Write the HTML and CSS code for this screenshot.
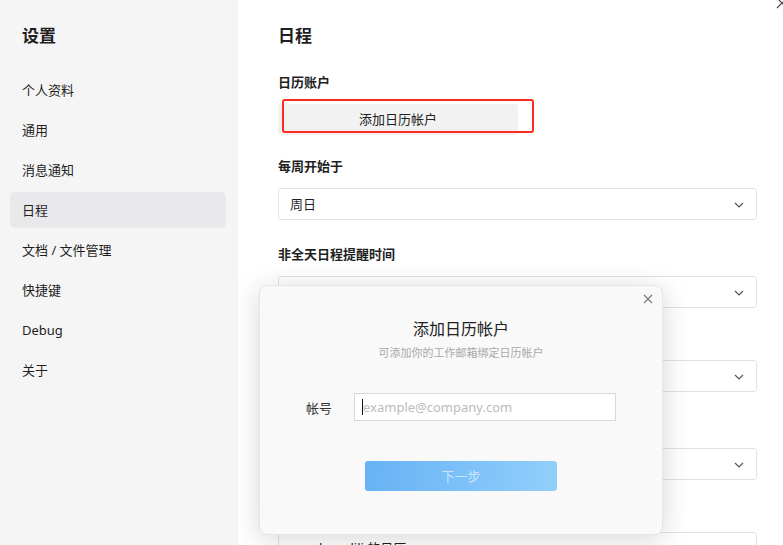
FILE: index.html
```html
<!DOCTYPE html>
<html lang="zh-CN">
<head>
    <meta charset="UTF-8">
    <title>设置</title>
    <link rel="stylesheet" href="styles.css">
</head>
<body>
    <div class="app">
        <div class="sidebar">
            <div class="side-title">设置</div>
            <div class="nav-item">个人资料</div>
            <div class="nav-item">通用</div>
            <div class="nav-item">消息通知</div>
            <div class="nav-item active">日程</div>
            <div class="nav-item">文档 / 文件管理</div>
            <div class="nav-item">快捷键</div>
            <div class="nav-item">Debug</div>
            <div class="nav-item">关于</div>
        </div>

        <div class="main">
            <div class="page-title">日程</div>

            <div class="label first">日历账户</div>
            <div class="add-wrap">
                <div class="add-btn">添加日历帐户</div>
                <div class="mark"></div>
            </div>

            <div class="label">每周开始于</div>
            <div class="select">周日
                <svg class="chev" width="10" height="6" viewBox="0 0 10 6"><path d="M1 1l4 4 4-4" fill="none" stroke="#555" stroke-width="1.2"/></svg>
            </div>

            <div class="label">非全天日程提醒时间</div>
            <div class="select">提前5分钟
                <svg class="chev" width="10" height="6" viewBox="0 0 10 6"><path d="M1 1l4 4 4-4" fill="none" stroke="#555" stroke-width="1.2"/></svg>
            </div>

            <div class="label tight">全天日程提醒时间</div>
            <div class="select">当天 09:00
                <svg class="chev" width="10" height="6" viewBox="0 0 10 6"><path d="M1 1l4 4 4-4" fill="none" stroke="#555" stroke-width="1.2"/></svg>
            </div>

            <div class="label">默认时区</div>
            <div class="select">(GMT+08:00) 中国标准时间 - 北京
                <svg class="chev" width="10" height="6" viewBox="0 0 10 6"><path d="M1 1l4 4 4-4" fill="none" stroke="#555" stroke-width="1.2"/></svg>
            </div>

            <div class="label tight">默认日历</div>
            <div class="select"><span class="dot"></span>zhanglili 的日历</div>
        </div>
    </div>

    <svg class="win-close" width="12" height="12" viewBox="0 0 12 12"><path d="M1 1l10 10M11 1L1 11" stroke="#444" stroke-width="1.2"/></svg>

    <div class="dialog">
        <svg class="dlg-close" width="10" height="10" viewBox="0 0 10 10"><path d="M1 1l8 8M9 1L1 9" stroke="#777" stroke-width="1.1"/></svg>
        <div class="dlg-title">添加日历帐户</div>
        <div class="dlg-sub">可添加你的工作邮箱绑定日历帐户</div>
        <div class="dlg-row">
            <div class="dlg-label">帐号</div>
            <div class="dlg-input"><span class="caret"></span>example@company.com</div>
        </div>
        <div class="dlg-btn">下一步</div>
    </div>
</body>
</html>
```

FILE: styles.css
```css
body {
    margin: 0;
    width: 783px;
    height: 545px;
    overflow: hidden;
    font-family: "Noto Sans", "Noto Sans CJK SC", sans-serif;
    color: #1f1f1f;
    background-color: #fff;
    position: relative;
}
.app {
    display: flex;
    height: 545px;
}
.sidebar {
    width: 238px;
    flex-shrink: 0;
    background-color: #f5f5f5;
    padding: 24px 12px 0 10px;
    box-sizing: border-box;
}
.side-title {
    font-size: 17px;
    font-weight: bold;
    line-height: 24px;
    padding-left: 12px;
    margin-bottom: 24px;
}
.nav-item {
    height: 36px;
    line-height: 36px;
    font-size: 13px;
    padding-left: 12px;
    margin-bottom: 4px;
    border-radius: 5px;
}
.nav-item.active {
    background-color: #e9e9eb;
}
.main {
    flex: 1;
    padding: 24px 26px 0 40px;
}
.page-title {
    font-size: 17px;
    font-weight: bold;
    line-height: 24px;
}
.label {
    font-size: 13px;
    font-weight: bold;
    line-height: 20px;
    margin-top: 24px;
    margin-bottom: 12px;
}
.label.tight {
    margin-top: 20px;
}
.add-wrap {
    position: relative;
}
.add-btn {
    width: 240px;
    height: 31px;
    line-height: 31px;
    background-color: #f2f2f2;
    border-radius: 3px;
    text-align: center;
    font-size: 13px;
    color: #222;
}
.add-wrap + .label {
    margin-top: 21px;
}
.mark {
    position: absolute;
    left: 4px;
    top: -5px;
    width: 248px;
    height: 30px;
    border: 2px solid #ff2a1f;
    border-radius: 3px;
}
.select {
    position: relative;
    height: 32px;
    line-height: 30px;
    border: 1px solid #e3e3e3;
    border-radius: 3px;
    box-sizing: border-box;
    padding-left: 11px;
    font-size: 13px;
}
.chev {
    position: absolute;
    right: 12px;
    top: 13px;
}
.dot {
    display: inline-block;
    width: 7px;
    height: 7px;
    border-radius: 50%;
    background-color: #1e7bf0;
    margin: 0 12px 0 4px;
}
.win-close {
    position: absolute;
    left: 776px;
    top: -3px;
}
.dialog {
    position: absolute;
    left: 259px;
    top: 285px;
    width: 404px;
    height: 250px;
    box-sizing: border-box;
    background-color: #f9f9f9;
    border: 1px solid #e6e6e6;
    border-radius: 8px;
    box-shadow: 0 4px 28px rgba(0, 0, 0, 0.16);
    padding-top: 32px;
    text-align: center;
}
.dlg-close {
    position: absolute;
    right: 9px;
    top: 8px;
}
.dlg-title {
    font-size: 16px;
    line-height: 22px;
    color: #222;
}
.dlg-sub {
    font-size: 11px;
    line-height: 18px;
    margin-top: 4px;
    color: #a8a8a8;
}
.dlg-row {
    display: flex;
    align-items: center;
    margin-top: 31px;
    padding-left: 46px;
    text-align: left;
}
.dlg-label {
    width: 48px;
    font-size: 13px;
    color: #333;
}
.dlg-input {
    width: 262px;
    height: 28px;
    line-height: 26px;
    box-sizing: border-box;
    background-color: #fff;
    border: 1px solid #d9d9d9;
    font-size: 13px;
    color: #bcbcbc;
    padding-left: 7px;
}
.caret {
    display: inline-block;
    width: 1px;
    height: 16px;
    background-color: #111;
    vertical-align: -3px;
}
.dlg-btn {
    width: 192px;
    height: 30px;
    line-height: 30px;
    margin: 40px auto 0;
    border-radius: 3px;
    background: linear-gradient(100deg, #66b2f5, #92cffb);
    color: rgba(255, 255, 255, 0.6);
    font-size: 13px;
}
```
